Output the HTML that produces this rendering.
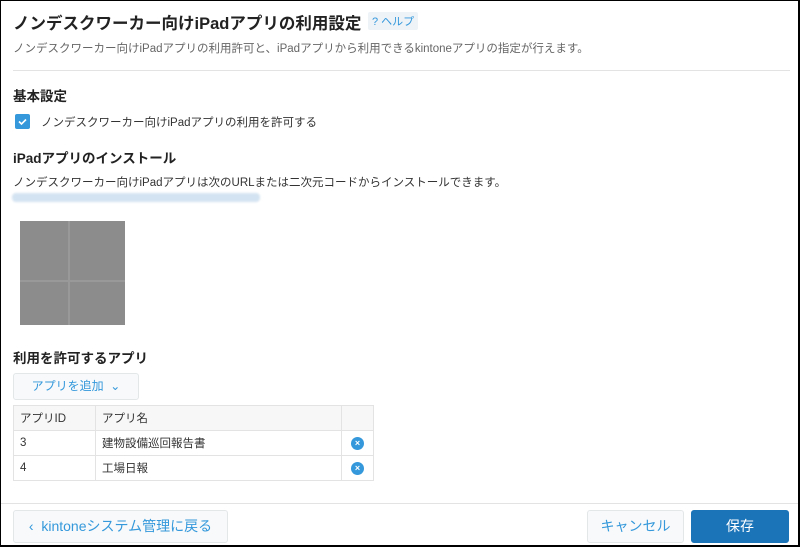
<!DOCTYPE html>
<html><head><meta charset="utf-8"><style>
*{box-sizing:border-box;margin:0;padding:0}
html{background:#000}
body{width:800px;height:547px;background:#000;font-family:"Liberation Sans","Noto Sans CJK JP",sans-serif;color:#333;position:relative;overflow:hidden}
#p{position:absolute;left:1px;top:1px;width:797px;height:544px;background:#fff}
.a{position:absolute;white-space:nowrap}
h1{font-size:16.5px;font-weight:bold;color:#222}
.help{background:#eef3f8;color:#3498db;font-size:11px;padding:1px 4px;border-radius:2px}
.h{font-size:13.5px;font-weight:bold;color:#222}
.t{font-size:11.5px;color:#333}
table{border-collapse:collapse;font-size:11.5px}
td{border:1px solid #e3e3e3;height:25px;padding:0 6px}
tr:first-child td{background:#f7f7f7}
.x{display:inline-block;width:13px;height:13px;border-radius:50%;background:#3498db;color:#fff;font-size:9px;line-height:13px;text-align:center;font-weight:bold}
.btn{position:absolute;border:1px solid #e3e7e8;background:#f7f9fa;border-radius:3px;color:#3498db;text-align:center}
</style></head><body>
<div id="p"></div>
<div class="a" style="left:13px;top:10px"><h1>ノンデスクワーカー向けiPadアプリの利用設定</h1></div>
<div class="a help" style="left:368px;top:12px">? ヘルプ</div>
<div class="a t" style="left:13px;top:40px;color:#666">ノンデスクワーカー向けiPadアプリの利用許可と、iPadアプリから利用できるkintoneアプリの指定が行えます。</div>
<div class="a" style="left:13px;top:70px;width:777px;height:1px;background:#e3e3e3"></div>
<div class="a h" style="left:13px;top:85px">基本設定</div>
<div class="a" style="left:15px;top:114px;width:15px;height:15px;background:#3498db;border-radius:2px"><svg width="15" height="15"><path d="M4 7.5l2.5 2.5 4.5-4.5" stroke="#fff" stroke-width="1.6" fill="none"/></svg></div>
<div class="a t" style="left:41px;top:114px">ノンデスクワーカー向けiPadアプリの利用を許可する</div>
<div class="a h" style="left:13px;top:147px">iPadアプリのインストール</div>
<div class="a t" style="left:13px;top:174px">ノンデスクワーカー向けiPadアプリは次のURLまたは二次元コードからインストールできます。</div>
<div class="a" style="left:12px;top:193px;width:248px;height:9px;background:#d3e3f1;border-radius:4px;filter:blur(1px)"></div>
<div class="a" style="left:20px;top:221px;width:105px;height:104px;background:#8c8c8c"></div>
<div class="a" style="left:68px;top:221px;width:2px;height:104px;background:#999"></div>
<div class="a" style="left:20px;top:280px;width:105px;height:2px;background:#999"></div>
<div class="a h" style="left:13px;top:347px">利用を許可するアプリ</div>
<div class="btn" style="left:13px;top:373px;width:126px;height:27px;line-height:25px;font-size:12px">アプリを追加 &nbsp;⌄</div>
<table class="a" style="left:13px;top:405px;width:361px">
<tr><td style="width:82px">アプリID</td><td style="width:246px">アプリ名</td><td></td></tr>
<tr><td>3</td><td>建物設備巡回報告書</td><td style="text-align:center"><span class="x">×</span></td></tr>
<tr><td>4</td><td>工場日報</td><td style="text-align:center"><span class="x">×</span></td></tr>
</table>
<div class="a" style="left:1px;top:503px;width:797px;height:1px;background:#e3e3e3"></div>
<div class="btn" style="left:13px;top:510px;width:215px;height:33px;line-height:31px;font-size:14px">‹ &nbsp;kintoneシステム管理に戻る</div>
<div class="btn" style="left:587px;top:510px;width:97px;height:33px;line-height:31px;font-size:14px">キャンセル</div>
<div class="btn" style="left:691px;top:510px;width:98px;height:33px;line-height:31px;font-size:14px;background:#1b73b8;border-color:#1b73b8;color:#fff">保存</div>
</body></html>
